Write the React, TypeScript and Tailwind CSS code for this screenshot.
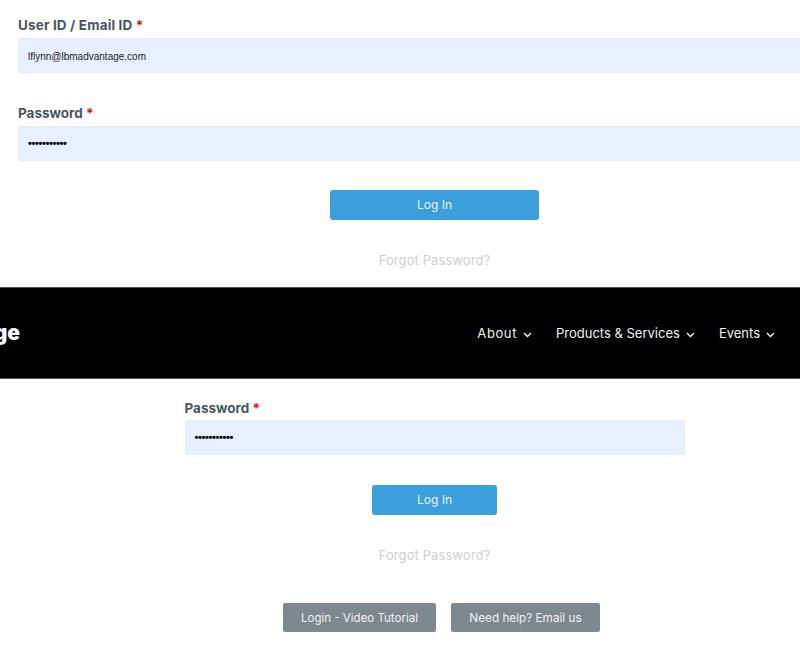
import React from "react";

const font = { fontFamily: '"Inter", "Open Sans", sans-serif' };

function Chevron() {
  return (
    <svg width="9" height="6" viewBox="0 0 9 6" fill="none" stroke="#f2f2f2" strokeWidth="1.4" className="mt-[1px]">
      <path d="M1 1l3.5 3.5L8 1" />
    </svg>
  );
}

function Label({ text, className = "" }: { text: string; className?: string }) {
  return (
    <div className={`h-[20px] text-[13.5px] leading-[20px] font-bold text-[#4a5560] ${className}`}>
      {text} <span className="text-[#e0101a]">*</span>
    </div>
  );
}

function Field({ value, dots, className = "" }: { value: string; dots?: boolean; className?: string }) {
  return (
    <div className={`flex h-[35px] items-center rounded-[2px] border border-[#e6ecf6] bg-[#e8f0fe] ${className}`}>
      {dots ? (
        <span className="pl-[9px] text-[11px] font-bold tracking-[-0.35px] text-black" style={{ fontFamily: '"Liberation Sans", sans-serif' }}>
          {value}
        </span>
      ) : (
        <span className="pl-[9px] pt-[1px] text-[10px] text-[#222]" style={{ fontFamily: '"Liberation Sans", sans-serif' }}>
          {value}
        </span>
      )}
    </div>
  );
}

function NavItem({ text, className = "" }: { text: string; className?: string }) {
  return (
    <div className={`flex items-center gap-[6px] text-[13px] text-[#f2f2f2] ${className}`}>
      <span>{text}</span>
      <Chevron />
    </div>
  );
}

export default function App() {
  return (
    <div className="h-[647px] w-[800px] overflow-hidden bg-white" style={font}>
      <section className="h-[287px] pt-[15px]">
        <div className="w-[820px] pl-[18px]">
          <Label text="User ID / Email ID" className="tracking-[0.15px]" />
          <div className="mt-[3px]">
            <Field value="lflynn@lbmadvantage.com" />
          </div>
          <div className="mt-[30px]">
            <Label text="Password" />
          </div>
          <div className="mt-[3px]">
            <Field value="•••••••••••" dots />
          </div>
        </div>
        <div className="mt-[29px] flex flex-col items-center pl-[69px]">
          <button className="h-[30px] w-[209px] rounded-[3px] bg-[#3a9fdb] text-[12px] text-[#e8f4fb]">Log In</button>
          <div className="mt-[30px] text-[13px] leading-[20px] tracking-[0.1px] text-[#cfcfcf]">Forgot Password?</div>
        </div>
      </section>

      <header className="flex h-[92px] items-center justify-between border-y border-[#555] bg-black pr-[25px]">
        <div className="w-[20px] overflow-hidden">
          <div className="flex justify-end text-[21px] font-black text-white">
            <span className="whitespace-nowrap">Advantage</span>
          </div>
        </div>
        <nav className="flex items-center gap-[24px] pt-[2px]">
          <NavItem text="About" className="tracking-[0.6px]" />
          <NavItem text="Products & Services" />
          <NavItem text="Events" />
        </nav>
      </header>

      <section className="flex flex-col items-center pl-[69px] pt-[19px]">
        <div className="w-[500px]">
          <Label text="Password" />
          <div className="mt-[2px]">
            <Field value="•••••••••••" dots />
          </div>
        </div>
        <button className="mt-[30px] h-[30px] w-[125px] rounded-[3px] bg-[#3a9fdb] text-[12px] text-[#e8f4fb]">Log In</button>
        <div className="mt-[30px] text-[13px] leading-[20px] tracking-[0.1px] text-[#cfcfcf]">Forgot Password?</div>
        <div className="ml-[14px] mt-[38px] flex gap-[15px]">
          <button className="h-[29px] w-[153px] rounded-[2px] bg-[#7f878f] pt-[2px] text-[11.5px] text-[#f2f2f2]">Login - Video Tutorial</button>
          <button className="h-[29px] w-[149px] rounded-[2px] bg-[#7f878f] pt-[2px] text-[11.75px] text-[#f2f2f2]">Need help? Email us</button>
        </div>
      </section>
    </div>
  );
}
